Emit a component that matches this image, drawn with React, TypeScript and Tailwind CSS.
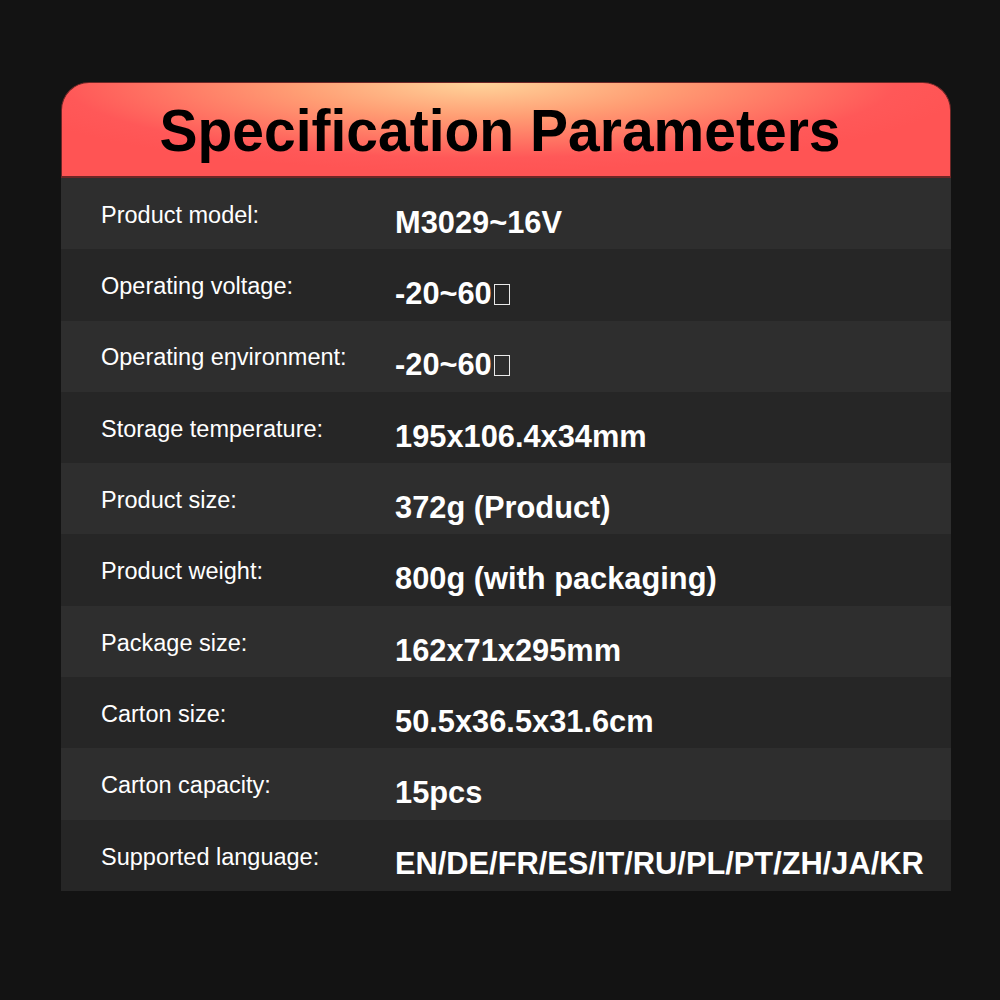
import type { ReactNode } from 'react'

const Tofu = () => (
  <span className="inline-block w-[16px] h-[21px] border border-white/90 ml-[2px] align-[-1px]" />
)

const rows: { label: string; value: ReactNode }[] = [
  { label: 'Product model:', value: 'M3029~16V' },
  { label: 'Operating voltage:', value: <>-20~60<Tofu /></> },
  { label: 'Operating eŋvironment:', value: <>-20~60<Tofu /></> },
  { label: 'Storage temperature:', value: '195x106.4x34mm' },
  { label: 'Product size:', value: '372g (Product)' },
  { label: 'Product weight:', value: '800g (with packaging)' },
  { label: 'Package size:', value: '162x71x295mm' },
  { label: 'Carton size:', value: '50.5x36.5x31.6cm' },
  { label: 'Carton capacity:', value: '15pcs' },
  { label: 'Supported language:', value: 'EN/DE/FR/ES/IT/RU/PL/PT/ZH/JA/KR' },
]

export default function App() {
  return (
    <div
      className="w-[1000px] h-[1000px] bg-[#131313] pt-[82px] pl-[61px]"
      style={{ fontFamily: '"Liberation Sans", Arial, sans-serif' }}
    >
      <div className="w-[890px]">
        <div className="h-[96px] rounded-t-[28px] border border-b-2 border-[#6e2626] bg-[radial-gradient(ellipse_55%_95%_at_47%_0%,#ffd49a_0%,#ff9e74_38%,#ff5858_85%,#ff5454_100%)] flex items-center justify-center pr-[12px]">
          <h1 className="text-[57px] font-bold text-black leading-none mt-[2px] scale-y-[1.04]">
            Specification Parameters
          </h1>
        </div>
        <div>
          {rows.map((row, i) => (
            <div
              key={row.label}
              className={`h-[71.3px] grid grid-cols-[294px_1fr] items-center pl-[40px] ${
                i % 2 === 0 ? 'bg-[#2e2e2e]' : 'bg-[#262626]'
              }`}
            >
              <span className="text-[23.5px] text-white leading-none mt-[4px]">{row.label}</span>
              <span className="text-[30.8px] font-bold text-white leading-none mt-[19px] whitespace-nowrap">
                {row.value}
              </span>
            </div>
          ))}
        </div>
      </div>
    </div>
  )
}
